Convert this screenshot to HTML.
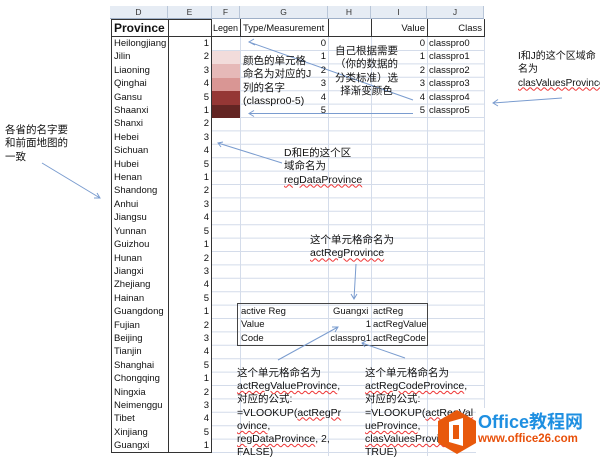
<!DOCTYPE html>
<html><head><meta charset="utf-8"><style>
*{margin:0;padding:0;box-sizing:border-box}
body{width:600px;height:456px;background:#fff;position:relative;overflow:hidden;font-family:"Liberation Sans","Noto Sans CJK SC",sans-serif;color:#111}
.a{position:absolute}
.hd{position:absolute;top:6px;height:13px;background:#e6ecf4;border-right:1px solid #b9c6d8;border-bottom:1px solid #9fb0c8;font-size:8.5px;text-align:center;line-height:12px;color:#333}
.c{position:absolute;font-size:9.5px;line-height:13.4px;height:13.4px;white-space:nowrap}
.r{text-align:right}
.n{position:absolute;font-size:10.5px;line-height:13.3px;white-space:nowrap;color:#111}
.u{text-decoration:underline wavy #e33;text-decoration-thickness:1px}
</style></head><body>
<svg class="a" style="left:0;top:0" width="600" height="456">
<g stroke="#d4dcea" stroke-width="1">
<line x1="240.5" y1="19" x2="240.5" y2="456"/><line x1="328.5" y1="19" x2="328.5" y2="456"/><line x1="371.5" y1="19" x2="371.5" y2="456"/><line x1="427.5" y1="19" x2="427.5" y2="456"/><line x1="484.5" y1="19" x2="484.5" y2="456"/>
<path d="M212 50.5H485M212 63.9H485M212 77.3H485M212 90.7H485M212 104.1H485M212 117.5H485M212 130.9H485M212 144.3H485M212 157.7H485M212 171.1H485M212 184.5H485M212 197.9H485M212 211.3H485M212 224.7H485M212 238.1H485M212 251.5H485M212 264.9H485M212 278.3H485M212 291.7H485M212 305.1H485M212 318.5H485M212 331.9H485M212 345.3H485M212 358.7H485M212 372.1H485M212 385.5H485M212 398.9H485M212 412.3H485M212 425.7H485M212 439.1H485M212 452.5H485"/>
</g>
<g fill="none" stroke="#333" stroke-width="1">
<rect x="111.5" y="19.5" width="100" height="433"/>
<line x1="168.5" y1="19" x2="168.5" y2="453"/>
<line x1="111" y1="36.5" x2="485" y2="36.5"/>
<line x1="240.5" y1="19" x2="240.5" y2="37"/><line x1="328.5" y1="19" x2="328.5" y2="37"/><line x1="371.5" y1="19" x2="371.5" y2="37"/><line x1="427.5" y1="19" x2="427.5" y2="37"/><line x1="484.5" y1="19" x2="484.5" y2="37"/>
<rect x="237.5" y="303.5" width="190" height="42" stroke="#444"/>
</g>
<g fill="none" stroke="#7a9ccf" stroke-width="1">
<path d="M413 100L249 42M254 39L249 42L255 45"/>
<path d="M413 113.5H249M254 110.5L249 113.5L254 116.5"/>
<path d="M562 98L493 103M498 99.5L493 103L498 106"/>
<path d="M42 163L100 198M94 198L100 198L97 193"/>
<path d="M282 163L218 143M223 142L218 143L221 147"/>
<path d="M356 264L354 299M351 294L354 299L357 294"/>
<path d="M278 360L338 327M332 327L338 327L335 332"/>
<path d="M405 358L362 343M366 341L362 343L365 347"/>
</g>
</svg>
<div class="hd" style="left:110px;width:58px">D</div>
<div class="hd" style="left:168px;width:44px">E</div>
<div class="hd" style="left:212px;width:28px">F</div>
<div class="hd" style="left:240px;width:88px">G</div>
<div class="hd" style="left:328px;width:43px">H</div>
<div class="hd" style="left:371px;width:56px">I</div>
<div class="hd" style="left:427px;width:57px">J</div>
<div class="c" style="left:114px;top:21px;font-size:12px;font-weight:bold;line-height:15px">Province</div>
<div class="c" style="left:213px;top:22px;font-size:9px;width:27px;overflow:hidden">Legen</div>
<div class="c" style="left:243px;top:22px">Type/Measurement</div>
<div class="c r" style="left:371px;top:22px;width:54px">Value</div>
<div class="c r" style="left:427px;top:22px;width:55px">Class</div>
<div class="a" style="left:212px;top:51px;width:28px;height:13.4px;background:#f2dcdb"></div>
<div class="a" style="left:212px;top:64.4px;width:28px;height:13.4px;background:#e6b9b8"></div>
<div class="a" style="left:212px;top:77.8px;width:28px;height:13.4px;background:#d99694"></div>
<div class="a" style="left:212px;top:91.2px;width:28px;height:13.4px;background:#953735"></div>
<div class="a" style="left:212px;top:104.6px;width:28px;height:13.4px;background:#632523"></div>
<div class="a" style="left:240px;top:37px;width:86px;font-size:9.5px;line-height:13.4px;text-align:right">0<br>1<br>2<br>3<br>4<br>5</div>
<div class="a" style="left:371px;top:37px;width:54px;font-size:9.5px;line-height:13.4px;text-align:right">0<br>1<br>2<br>3<br>4<br>5</div>
<div class="a" style="left:429px;top:37px;font-size:9.5px;line-height:13.4px">classpro0<br>classpro1<br>classpro2<br>classpro3<br>classpro4<br>classpro5</div>
<div class="a" style="left:114px;top:37px;font-size:9.5px;line-height:13.4px">Heilongjiang<br>Jilin<br>Liaoning<br>Qinghai<br>Gansu<br>Shaanxi<br>Shanxi<br>Hebei<br>Sichuan<br>Hubei<br>Henan<br>Shandong<br>Anhui<br>Jiangsu<br>Yunnan<br>Guizhou<br>Hunan<br>Jiangxi<br>Zhejiang<br>Hainan<br>Guangdong<br>Fujian<br>Beijing<br>Tianjin<br>Shanghai<br>Chongqing<br>Ningxia<br>Neimenggu<br>Tibet<br>Xinjiang<br>Guangxi</div>
<div class="a" style="left:169px;top:37px;width:40px;text-align:right;font-size:9.5px;line-height:13.4px">1<br>2<br>3<br>4<br>5<br>1<br>2<br>3<br>4<br>5<br>1<br>2<br>3<br>4<br>5<br>1<br>2<br>3<br>4<br>5<br>1<br>2<br>3<br>4<br>5<br>1<br>2<br>3<br>4<br>5<br>1</div>
<div class="a" style="left:241px;top:305px;font-size:9.5px;line-height:13.4px">active Reg<br>Value<br>Code</div>
<div class="a" style="left:329px;top:305px;width:42px;font-size:9.5px;line-height:13.4px;text-align:right;white-space:nowrap">Guangxi&nbsp;<br>1<br>classpro1</div>
<div class="a" style="left:373px;top:305px;font-size:9.5px;line-height:13.4px">actReg<br>actRegValue<br>actRegCode</div>
<div class="n" style="left:243px;top:55px">颜色的单元格<br>命名为对应的J<br>列的名字<br>(classpro0-5)</div>
<div class="n" style="left:335px;top:45px;text-align:center">自己根据需要<br>（你的数据的<br>分类标准）选<br>择渐变颜色</div>
<div class="n" style="left:518px;top:50px;font-size:10px">I和J的这个区域命<br>名为<br><span class="u">clasValuesProvince</span></div>
<div class="n" style="left:5px;top:124px">各省的名字要<br>和前面地图的<br>一致</div>
<div class="n" style="left:284px;top:147px">D和E的这个区<br>域命名为<br><span class="u">regDataProvince</span></div>
<div class="n" style="left:310px;top:234px">这个单元格命名为<br><span class="u">actRegProvince</span></div>
<div class="n" style="left:237px;top:367px;line-height:13.2px">这个单元格命名为<br><span class="u">actRegValueProvince</span>,<br>对应的公式:<br>=VLOOKUP(<span class="u">actRegPr</span><br><span class="u">ovince</span>,<br><span class="u">regDataProvince</span>, 2,<br>FALSE)</div>
<div class="n" style="left:365px;top:367px;line-height:13.2px">这个单元格命名为<br><span class="u">actRegCodeProvince</span>,<br>对应的公式:<br>=VLOOKUP(<span class="u">actRegVal</span><br><span class="u">ueProvince</span>,<br><span class="u">clasValuesProvince</span>,<br>TRUE)</div>
<div class="a" style="left:476px;top:408px;width:124px;height:48px;background:#fff"></div>
<svg class="a" style="left:436px;top:409px" width="42" height="46" viewBox="0 0 42 46">
<polygon points="21,1 40,12 40,34 21,45 2,34 2,12" fill="#e8590c"/>
<path d="M13 13L27 9V37L13 33Z" fill="#fff"/>
<rect x="17" y="16" width="6" height="14" fill="#e8590c"/>
</svg>
<div class="a" style="left:478px;top:411px;font-size:18px;font-weight:bold;color:#1e8fe1;white-space:nowrap;line-height:22px">Office教程网</div>
<div class="a" style="left:478px;top:432px;font-size:11.5px;font-weight:bold;color:#e8500a;white-space:nowrap;line-height:14px">www.office26.com</div>
</body></html>
